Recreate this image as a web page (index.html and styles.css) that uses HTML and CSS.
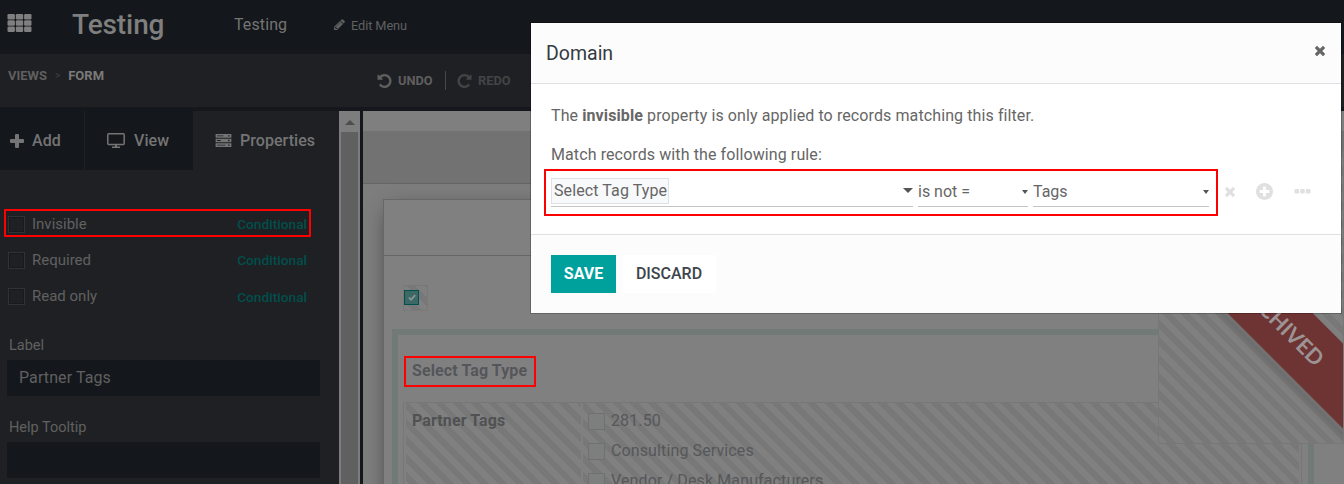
FILE: index.html
```html
<!DOCTYPE html>
<html lang="en">
<head>
<meta charset="utf-8">
<title>Studio</title>
<link rel="stylesheet" href="styles.css">
</head>
<body>
<div class="app">
  <header class="navbar">
    <svg class="apps" viewBox="0 0 24 18"><g><rect width="7.4" height="5.4" rx="1.2"/><rect x="8.3" width="7.4" height="5.4" rx="1.2"/><rect x="16.6" width="7.4" height="5.4" rx="1.2"/><rect y="6.3" width="7.4" height="5.4" rx="1.2"/><rect x="8.3" y="6.3" width="7.4" height="5.4" rx="1.2"/><rect x="16.6" y="6.3" width="7.4" height="5.4" rx="1.2"/><rect y="12.6" width="7.4" height="5.4" rx="1.2"/><rect x="8.3" y="12.6" width="7.4" height="5.4" rx="1.2"/><rect x="16.6" y="12.6" width="7.4" height="5.4" rx="1.2"/></g></svg>
    <span class="brand">Testing</span>
    <span class="menu">Testing</span>
    <span class="edit"><svg viewBox="128 128 1536 1536"><path d="M491 1536l91-91-235-235-91 91v107h128v128h107zm523-928q0-22-22-22-10 0-17 7l-542 542q-7 7-7 17 0 22 22 22 10 0 17-7l542-542q7-7 7-17zm-54-192l416 416-832 832h-416v-416zm683 96q0 53-37 90l-166 166-416-416 166-165q36-38 90-38 53 0 91 38l235 234q37 39 37 91z"/></svg>Edit Menu</span>
  </header>
  <div class="toolbar">
    <div class="crumbs"><b>VIEWS</b><i>&gt;</i><b class="current">FORM</b></div>
    <div class="history">
      <span class="undo"><svg viewBox="128 128 1536 1536"><path d="M1664 896q0 156-61 298t-164 245-245 164-298 61q-172 0-327-72.500t-264-204.500q-7-10-6.500-22.500t8.500-20.500l137-138q10-9 25-9 16 2 23 12 73 95 179 147t225 52q104 0 198.500-40.500t163.500-109.500 109.500-163.500 40.500-198.500-40.500-198.500-109.500-163.500-163.500-109.500-198.500-40.500q-98 0-188 35.500t-160 101.500l137 138q31 30 14 69-17 40-59 40h-448q-26 0-45-19t-19-45v-448q0-42 40-59 39-17 69 14l130 129q107-101 244.500-156.500t284.500-55.500q156 0 298 61t245 164 164 245 61 298z"/></svg>UNDO</span>
      <span class="redo"><svg class="flip" viewBox="128 128 1536 1536"><path d="M1664 896q0 156-61 298t-164 245-245 164-298 61q-172 0-327-72.500t-264-204.500q-7-10-6.500-22.500t8.500-20.500l137-138q10-9 25-9 16 2 23 12 73 95 179 147t225 52q104 0 198.500-40.500t163.500-109.500 109.500-163.500 40.500-198.500-40.500-198.500-109.500-163.500-163.500-109.500-198.500-40.500q-98 0-188 35.500t-160 101.500l137 138q31 30 14 69-17 40-59 40h-448q-26 0-45-19t-19-45v-448q0-42 40-59 39-17 69 14l130 129q107-101 244.500-156.500t284.500-55.500q156 0 298 61t245 164 164 245 61 298z"/></svg>REDO</span>
    </div>
  </div>
  <main class="main">
    <aside class="sidebar">
      <nav class="tabs">
        <span class="tab tab-add"><svg viewBox="0 0 14 14"><path d="M5 1q0-1 1-1h2q1 0 1 1v4h4q1 0 1 1v2q0 1-1 1H9v4q0 1-1 1H6q-1 0-1-1V9H1Q0 9 0 8V6q0-1 1-1h4z"/></svg>Add</span>
        <span class="tab tab-view"><svg viewBox="0 0 18 15"><rect x=".8" y=".8" width="16.400" height="10.700" rx="1" fill="none" stroke="currentColor" stroke-width="1.500"/><path d="M8 12h2v1.500h3V15H5v-1.500h3z"/></svg>View</span>
        <span class="tab tab-props"><svg viewBox="0 0 17 14"><path fill-rule="evenodd" d="M0 0h17v4H0zM1.500 1.500v1h7v-1zM13.500 1.300v1.400h1.500V1.300zM0 5h17v4H0zM1.500 6.500v1h4v-1zM13.500 6.300v1.400h1.500V6.300zM0 10h17v4H0zM1.500 11.500v1h9v-1zM13.500 11.300v1.400h1.500v-1.400z"/></svg>Properties</span>
      </nav>
      <div class="options">
        <div class="option marked"><i class="box"></i><span>Invisible</span><b>Conditional</b></div>
        <div class="option"><i class="box"></i><span>Required</span><b>Conditional</b></div>
        <div class="option"><i class="box"></i><span>Read only</span><b>Conditional</b></div>
      </div>
      <label class="caption">Label</label>
      <div class="input">Partner Tags</div>
      <label class="caption">Help Tooltip</label>
      <div class="input"></div>
    </aside>
    <div class="scrollbar"><i class="arrow"></i><i class="thumb"></i></div>
    <section class="canvas">
      <div class="strip"></div>
      <div class="control"></div>
      <div class="sheet">
        <div class="status"></div>
        <div class="flag stripes"><i class="check"><svg viewBox="0 0 10 8"><path d="M1 4l2.800 2.800L9 1" fill="none" stroke="currentColor" stroke-width="2.200"/></svg></i></div>
        <div class="group">
          <div class="heading">Select Tag Type</div>
          <div class="table">
            <div class="cell cell-label stripes">Partner Tags</div>
            <div class="cell cell-values stripes">
              <div class="value"><i class="box"></i>281.50</div>
              <div class="value"><i class="box"></i>Consulting Services</div>
              <div class="value"><i class="box"></i>Vendor / Desk Manufacturers</div>
            </div>
          </div>
        </div>
      </div>
      <div class="corner stripes"><div class="ribbon">ARCHIVED</div></div>
    </section>
  </main>
  <div class="dialog">
    <div class="dialog-head"><span>Domain</span><svg viewBox="302 366 1188 1188"><path d="M1490 1322q0 40-28 68l-136 136q-28 28-68 28t-68-28l-294-294-294 294q-28 28-68 28t-68-28l-136-136q-28-28-28-68t28-68l294-294-294-294q-28-28-28-68t28-68l136-136q28-28 68-28t68 28l294 294 294-294q28-28 68-28t68 28l136 136q28 28 28 68t-28 68l-294 294 294 294q28 28 28 68z"/></svg></div>
    <div class="dialog-body">
      <p class="intro">The <b>invisible</b> property is only applied to records matching this filter.</p>
      <p class="match">Match records with the following rule:</p>
      <div class="rule">
        <div class="fields">
          <div class="field field-path"><span class="token">Select Tag Type</span><i class="caret wide"></i></div>
          <div class="field field-op"><span>is not =</span><i class="caret"></i></div>
          <div class="field field-value"><span>Tags</span><i class="caret"></i></div>
        </div>
        <svg class="remove" viewBox="302 366 1188 1188"><path d="M1490 1322q0 40-28 68l-136 136q-28 28-68 28t-68-28l-294-294-294 294q-28 28-68 28t-68-28l-136-136q-28-28-28-68t28-68l294-294-294-294q-28-28-28-68t28-68l136-136q28-28 68-28t68 28l294 294 294-294q28-28 68-28t68 28l136 136q28 28 28 68t-28 68l-294 294 294 294q28 28 28 68z"/></svg>
        <svg class="plus" viewBox="128 128 1536 1536"><path d="M1344 960v-128q0-26-19-45t-45-19h-256v-256q0-26-19-45t-45-19h-128q-26 0-45 19t-19 45v256h-256q-26 0-45 19t-19 45v128q0 26 19 45t45 19h256v256q0 26 19 45t45 19h128q26 0 45-19t19-45v-256h256q26 0 45-19t19-45zm320-64q0 209-103 385.500t-279.500 279.500-385.500 103-385.500-103-279.500-279.500-103-385.500 103-385.500 279.500-279.500 385.500-103 385.500 103 279.500 279.500 103 385.500z"/></svg>
        <svg class="dots" viewBox="0 0 16 5"><rect width="4.600" height="4.600" rx="1"/><rect x="5.700" width="4.600" height="4.600" rx="1"/><rect x="11.400" width="4.600" height="4.600" rx="1"/></svg>
      </div>
    </div>
    <div class="dialog-foot"><button class="save">SAVE</button><button class="discard">DISCARD</button></div>
  </div>
</div>
</body>
</html>
```
FILE: styles.css
```css
* { box-sizing: border-box; }
body { margin: 0; font: 16px/20px Roboto, sans-serif; overflow: hidden; background: #14171b; }
svg { display: block; fill: currentColor; flex: none; }
i { font-style: normal; }
.app { position: relative; width: 1344px; height: 484px; display: flex; flex-direction: column; overflow: hidden; }

.navbar { height: 54px; flex: none; display: flex; align-items: center; padding: 0 0 6px 7px; color: #7f7f7f; background: #14171b; }
.apps { width: 25px; height: 18px; margin-top: -2px; }
.brand { width: 162px; margin-left: 40px; font-size: 28px; font-weight: 500; letter-spacing: -.1px; padding-top: 1px; }
.menu { width: 100px; color: #747474; padding-top: 1px; letter-spacing: .1px; }
.edit { display: flex; align-items: center; gap: 6px; font-size: 12.800px; letter-spacing: -.1px; color: #5f6062; padding-top: 3px; }
.edit svg { width: 11px; height: 11px; margin-top: -2px; }
.toolbar { height: 53px; flex: none; display: flex; background: #1f2023; font-size: 13px; color: #5f5f60; }
.crumbs { width: 377px; padding: 12px 0 0 8px; display: flex; gap: 8px; }
.crumbs b { font-weight: 700; font-size: 13px; }
.crumbs i { font-size: 10px; color: #404144; }
.crumbs .current { color: #7a7a7a; }
.history { display: flex; padding-top: 17px; font-weight: 700; font-size: 12.800px; }
.history span { height: 19px; display: flex; align-items: center; gap: 6px; }
.history svg { width: 15px; height: 14px; }
.undo { width: 69px; border-right: 1px solid #46474a; }
.redo { padding-left: 11px; color: #434446; }
.flip { transform: scaleX(-1); }

.main { display: flex; flex: 1; min-height: 0; margin-top: 4px; }
.sidebar { width: 339px; flex: none; background: #1f2023; color: #606061; overflow: hidden; }
.tabs { display: flex; height: 59px; font-weight: 500; color: #747475; letter-spacing: .05px; }
.tab { display: flex; align-items: center; background: #14171b; }
.tab-add { width: 85px; padding-left: 10px; gap: 8px; border-right: 1px solid #1f2023; }
.tab-add svg { width: 14px; height: 14px; }
.tab-view { width: 108px; padding-left: 22px; gap: 9px; }
.tab-view svg { width: 18px; height: 15px; }
.tab-props { width: 146px; padding-left: 22px; gap: 8px; background: #1f2023; }
.tab-props svg { width: 17px; height: 13px; }
.options { padding-top: 39px; }
.option { display: flex; align-items: center; width: 307px; height: 28px; margin: 0 0 8.300px 4px; padding: 1px 4px 0; font-size: 15px; }
.marked { box-shadow: inset 0 0 0 2px #f00; }
.box { width: 17px; height: 17px; border: 1px solid #313235; flex: none; box-shadow: inset 0 0 0 1px #17191c; margin: 1px 7px 0 0; }
.option span { flex: 1; }
.option b { font-size: 13.700px; font-weight: 500; color: #004f4c; padding-top: 1px; }
.caption { display: block; margin: 26px 0 0 9px; font-size: 14.500px; }
.input { width: 313px; height: 36px; margin: 4px 0 0 7px; padding: 8px 12px; background: #14171b; color: #606061; letter-spacing: .1px; }
.input + .caption { margin-top: 22px; }
.scrollbar { width: 21px; flex: none; background: #7d7d7d; display: flex; flex-direction: column; align-items: center; }
.arrow { border: 5px solid transparent; border-top: 0; border-bottom: 5px solid #4d4d4d; margin-top: 9px; }
.thumb { width: 17px; flex: 1; margin-top: 7px; background: #606060; }

.canvas { position: relative; flex: 1; margin-left: 3px; background: #7d7d7d; overflow: hidden; color: #505153; }
.strip { height: 20px; background: #7f7f7f; }
.control { height: 53px; background: #727272; border-bottom: 1px solid #656565; }
.sheet { margin: 15px 0 0 20px; height: 600px; border: 1px solid #676767; border-right: 0; background: #808080; box-shadow: 0 5px 20px -8px #222; }
.status { height: 56px; border-bottom: 1px solid #666; }
.stripes { background: repeating-linear-gradient(45deg, #808080 0 6.250px, #787878 6.250px 12.500px); }
.flag { width: 25px; height: 26px; margin: 29px 0 0 19px; border: 1px solid #797979; padding: 4px 0 0 0; }
.check { display: flex; align-items: center; justify-content: center; width: 15px; height: 15px; border: 1px solid #00514e; background: #3c6866; color: #8c9695; }
.check svg { width: 8px; height: 7px; }
.group { width: 922px; height: 400px; margin: 18px 0 0 8px; border: 6px solid #727a78; padding: 21px 6px 0 5px; }
.heading { width: 132px; height: 31px; margin-left: 1px; padding: 3px 6px; border: 2px solid #f00; font-weight: 700; color: #55565a; white-space: nowrap; letter-spacing: .1px; }
.table { display: flex; height: 300px; margin-top: 15px; border: 1px solid #777; padding: 0 2px; gap: 2px; }
.cell-label { width: 175px; flex: none; padding: 8px 6px; font-weight: 700; letter-spacing: .1px; }
.cell-values { flex: 1; padding: 3px 5px; }
.value { display: flex; align-items: center; height: 30px; color: #56575a; letter-spacing: .12px; }
.value .box { border-color: #707070; background: #7c7f7e; box-shadow: none; margin-right: 6px; }
.corner { position: absolute; left: 795px; top: 40px; width: 186px; height: 293px; border: 1px solid #777; overflow: hidden; }
.ribbon { position: absolute; left: -28px; top: 142px; width: 300px; height: 60px; line-height: 58px; transform: rotate(45deg); text-align: center; background: #6e3333; color: #9c9494; font-family: Lato, sans-serif; font-size: 21.500px; font-weight: 700; box-shadow: 0 5px 10px rgba(0,0,0,.15); }

.dialog { position: absolute; left: 531px; top: 23px; width: 810px; height: 290px; display: flex; flex-direction: column; background: #fff; color: #666; outline: 1px solid rgba(0,0,0,.22); }
.dialog-head { display: flex; justify-content: space-between; height: 61px; padding: 21px 16px 19px 15px; background: #fcfcfc; border-bottom: 1px solid #dee0e3; font-size: 19.500px; color: #343a40; }
.dialog-head svg { width: 10px; height: 10px; margin-top: 2px; color: #666; }
.dialog-body { flex: 1; padding: 22px 0 0 13px; }
.dialog-body p { margin: 0 0 19px 7px; letter-spacing: .1px; }
.dialog-body p.match { margin-bottom: 4px; }
.rule { display: flex; align-items: center; color: #e0e0e0; }
.rule > svg { margin-bottom: 2px; }
.fields { display: flex; gap: 5px; width: 674px; height: 47px; padding: 5px 7px 5px 5px; border: 2px solid #f00; color: #666; }
.field { display: flex; justify-content: space-between; align-items: center; height: 31px; padding-top: 1px; border-bottom: 1px solid #c4c4c4; }
.field-path { width: 362px; }
.field-op { width: 110px; }
.field-value { width: 176px; }
.token { height: 26px; border: 1px solid #dee2e6; background: #f8f9fa; padding: 2px 1px 2px 2px; margin-bottom: 2px; letter-spacing: .1px; }
.caret { border: 3.500px solid transparent; border-top: 4px solid #555; border-bottom: 0; }
.wide { border-width: 5px 5px 0; margin-bottom: 2px; }
.remove { width: 10px; height: 10px; margin-left: 7px; }
.plus { width: 17px; height: 17px; margin-left: 21px; }
.dots { width: 17px; height: 5px; margin-left: 21px; }
.dialog-foot { display: flex; gap: 7px; height: 79px; padding: 20px; background: #fcfcfc; border-top: 1px solid #dee0e3; }
button { height: 38px; border: 0; padding: 0; font: 500 16px/20px Roboto, sans-serif; }
.save { width: 65px; background: #00a09d; color: #fff; font-weight: 700; }
.discard { width: 93px; padding-right: 1px; background: #fff; color: #3e444a; }
```
